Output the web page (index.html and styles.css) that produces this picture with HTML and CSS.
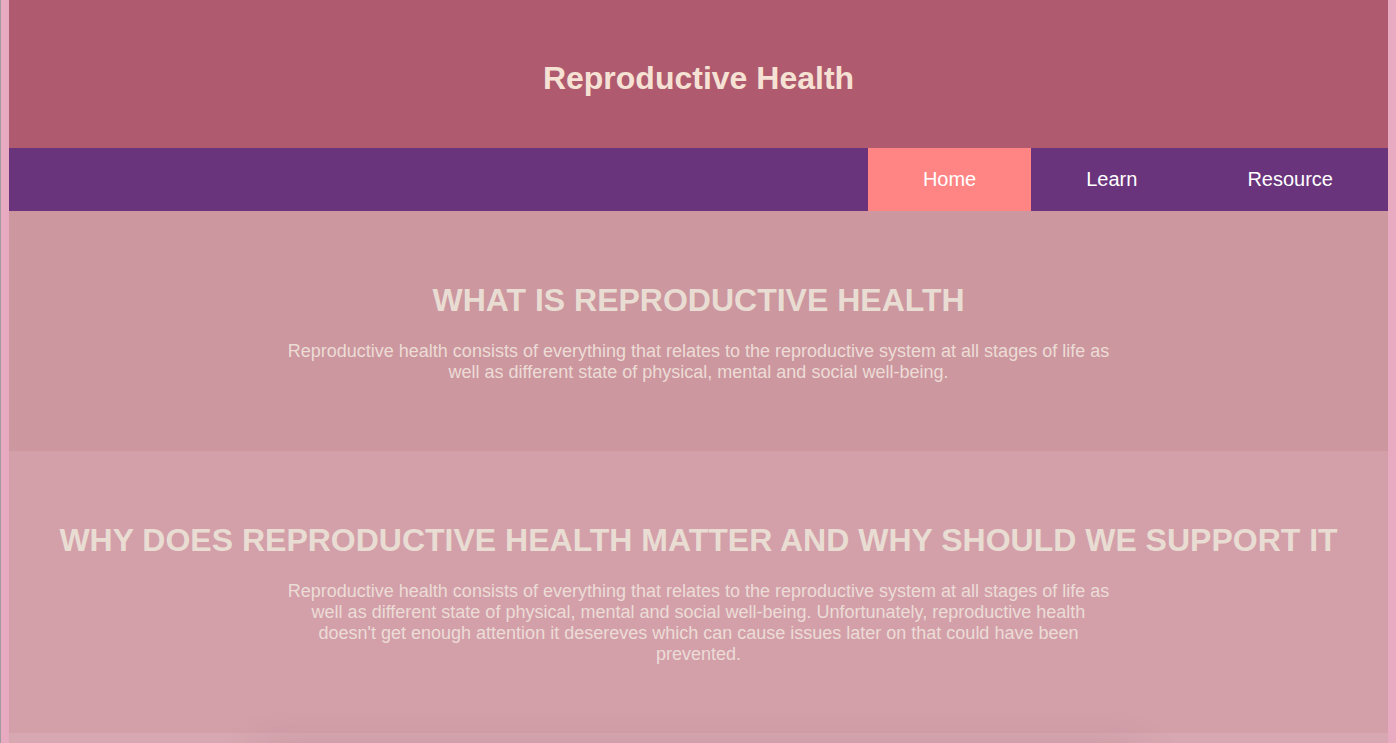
FILE: index.html
```html
<!DOCTYPE html>
<html lang="en">
<head>
<meta charset="utf-8">
<title>Reproductive Health</title>
<link rel="stylesheet" href="styles.css">
</head>
<body>
<header class="site-header">
  <h1 class="site-title">Reproductive Health</h1>
</header>
<nav class="site-nav">
  <a class="nav-item active" href="#">Home</a>
  <a class="nav-item" href="#">Learn</a>
  <a class="nav-item" href="#">Resource</a>
</nav>
<main>
  <section class="info info-one">
    <h2 class="info-title">WHAT IS REPRODUCTIVE HEALTH</h2>
    <p class="info-text">Reproductive health consists of everything that relates to the reproductive system at all stages of life as well as different state of physical, mental and social well-being.</p>
  </section>
  <section class="info info-two">
    <h2 class="info-title">WHY DOES REPRODUCTIVE HEALTH MATTER AND WHY SHOULD WE SUPPORT IT</h2>
    <p class="info-text">Reproductive health consists of everything that relates to the reproductive system at all stages of life as well as different state of physical, mental and social well-being. Unfortunately, reproductive health doesn't get enough attention it desereves which can cause issues later on that could have been prevented.</p>
  </section>
  <section class="cards">
    <div class="card"></div>
  </section>
</main>
</body>
</html>
```
FILE: styles.css
```css
html {
  background: #e8aac0;
  border-left: 1px solid #a09a9c;
}
body {
  margin: 0 8px;
  font-family: "Liberation Sans", Arial, Helvetica, sans-serif;
  background: #e8aac0;
}
.site-header {
  background: #af5a6e;
  padding: 60px 0 51px;
  text-align: center;
}
.site-title {
  margin: 0;
  font-size: 32px;
  line-height: 37px;
  font-weight: bold;
  color: #f6e2d4;
}
.site-nav {
  display: flex;
  justify-content: flex-end;
  background: #6a347d;
}
.nav-item {
  display: block;
  padding: 20px 55px 20px;
  font-size: 20px;
  line-height: 23px;
  color: #ffffff;
  text-decoration: none;
}
.nav-item.active {
  background: #ff8585;
}
.info {
  padding: 71px 0 69px;
  text-align: center;
}
.info-one {
  background: #cc979f;
}
.info-two {
  background: #d3a0aa;
}
.info-title {
  margin: 0 0 22px;
  font-size: 32px;
  line-height: 37px;
  font-weight: bold;
  color: #e9ddd3;
}
.info-text {
  width: 60%;
  margin: 0 auto;
  font-size: 18px;
  line-height: 20.7px;
  color: #ecdcd6;
}
.cards {
  position: relative;
  background: #d8a8b2;
  padding: 22px 0 40px;
}
.card {
  width: 64%;
  height: 300px;
  margin: 0 auto;
  background: #d8a8b2;
  box-shadow: 0 0 40px rgba(90, 40, 50, 0.22);
}
```
